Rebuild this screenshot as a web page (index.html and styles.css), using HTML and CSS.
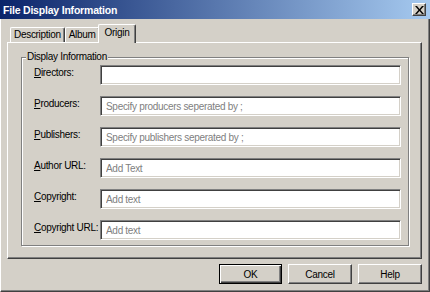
FILE: index.html
```html
<!DOCTYPE html>
<html>

<head>
    <title>File Display Information</title>
    <link rel="stylesheet" href="styles.css">
</head>

<body>
    <div class="window">
        <div class="titlebar">
            <span class="title">File Display Information</span>
            <div class="close-btn">
                <svg width="9" height="8" viewBox="0 0 9 8">
                    <path d="M0 0h2l2.5 3 2.5-3h2l-3.5 4 3.5 4h-2l-2.5-3-2.5 3h-2l3.5-4z" fill="#000" />
                </svg>
            </div>
        </div>

        <div class="tabs">
            <div class="tab">Description</div>
            <div class="tab">Album</div>
            <div class="tab active">Origin</div>
        </div>

        <div class="tab-panel">
            <fieldset class="group">
                <legend>Display Information</legend>
                <div class="form-row">
                    <label><u>D</u>irectors:</label>
                    <input type="text">
                </div>
                <div class="form-row">
                    <label><u>P</u>roducers:</label>
                    <input type="text" placeholder="Specify producers seperated by ;">
                </div>
                <div class="form-row">
                    <label><u>P</u>ublishers:</label>
                    <input type="text" placeholder="Specify publishers seperated by ;">
                </div>
                <div class="form-row">
                    <label><u>A</u>uthor URL:</label>
                    <input type="text" placeholder="Add Text">
                </div>
                <div class="form-row">
                    <label><u>C</u>opyright:</label>
                    <input type="text" placeholder="Add text">
                </div>
                <div class="form-row">
                    <label><u>C</u>opyright URL:</label>
                    <input type="text" placeholder="Add text">
                </div>
            </fieldset>
        </div>

        <div class="buttons">
            <button class="default">OK</button>
            <button>Cancel</button>
            <button>Help</button>
        </div>
    </div>
</body>

</html>
```

FILE: styles.css
```css
body {
    margin: 0;
    font-family: "Liberation Sans", Arial, sans-serif;
    font-size: 10px;
    letter-spacing: -0.3px;
    color: #000;
}

.window {
    width: 430px;
    height: 292px;
    box-sizing: border-box;
    background: #d4d0c8;
    border-left: 1px solid #fff;
    border-right: 1px solid #404040;
    border-bottom: 1px solid #404040;
    box-shadow: inset -1px -1px 0 #808080;
    display: flex;
    flex-direction: column;
}

.titlebar {
    height: 19px;
    margin-left: -1px;
    margin-right: -1px;
    display: flex;
    align-items: center;
    justify-content: space-between;
    padding: 0 4px 0 3px;
    background: linear-gradient(to right, #0a246a, #a6caf0);
}

.title {
    color: #fff;
    font-weight: bold;
    font-size: 10.5px;
    letter-spacing: -0.2px;
}

.close-btn {
    width: 14px;
    height: 13px;
    box-sizing: border-box;
    background: #d4d0c8;
    border-top: 1px solid #fff;
    border-left: 1px solid #fff;
    border-right: 1px solid #404040;
    border-bottom: 1px solid #404040;
    box-shadow: inset -1px -1px 0 #808080;
    display: flex;
    align-items: center;
    justify-content: center;
}

.tabs {
    display: flex;
    align-items: flex-end;
    height: 19px;
    margin-top: 4px;
    padding-left: 9px;
}

.tab {
    height: 15px;
    padding: 0 3px;
    box-sizing: border-box;
    line-height: 14px;
    border-top: 1px solid #fff;
    border-left: 1px solid #fff;
    border-right: 1px solid #404040;
    border-top-left-radius: 2px;
    border-top-right-radius: 2px;
    box-shadow: inset -1px 0 0 #808080;
}

.tab.active {
    height: 19px;
    margin: 0 -2px -1px;
    padding: 0 6px;
    line-height: 16px;
    background: #d4d0c8;
    position: relative;
    z-index: 1;
}

.tab-panel {
    height: 217px;
    margin: 0 7px 0 6px;
    box-sizing: border-box;
    border-top: 1px solid #fff;
    border-left: 1px solid #fff;
    border-right: 1px solid #404040;
    border-bottom: 1px solid #404040;
    box-shadow: inset -1px -1px 0 #808080;
    padding: 8px 12px 0 13px;
}

.group {
    margin: 0;
    padding: 2px 7px 3px 12px;
    height: 195px;
    box-sizing: border-box;
    border: 1px solid #808080;
    box-shadow: inset 1px 1px 0 #fff, 1px 1px 0 #fff;
}

.group legend {
    padding: 0 1px;
    margin-left: -8px;
    background: #d4d0c8;
    line-height: 12px;
}

.form-row {
    display: flex;
    align-items: flex-start;
    margin-bottom: 11px;
}

.form-row:last-child {
    margin-bottom: 0;
}

.form-row label {
    width: 66px;
    padding-top: 2px;
    flex-shrink: 0;
    white-space: nowrap;
}

.form-row input {
    flex: 1;
    min-width: 0;
    height: 20px;
    box-sizing: border-box;
    margin: 0;
    padding: 0 0 0 5px;
    font-family: inherit;
    font-size: 10px;
    letter-spacing: -0.3px;
    background: #fff;
    border-top: 1px solid #808080;
    border-left: 1px solid #808080;
    border-right: 1px solid #fff;
    border-bottom: 1px solid #fff;
    box-shadow: inset 1px 1px 0 #404040, inset -1px -1px 0 #d4d0c8;
    outline: none;
}

.form-row input::placeholder {
    color: #808080;
}

.buttons {
    display: flex;
    justify-content: flex-end;
    gap: 6px;
    margin-top: 5px;
    padding-right: 7px;
}

button {
    width: 64px;
    height: 20px;
    box-sizing: border-box;
    padding: 0;
    font-family: inherit;
    font-size: 10px;
    letter-spacing: -0.3px;
    color: #000;
    background: #d4d0c8;
    border-top: 1px solid #fff;
    border-left: 1px solid #fff;
    border-right: 1px solid #404040;
    border-bottom: 1px solid #404040;
    box-shadow: inset -1px -1px 0 #808080;
}

button.default {
    width: 63px;
    border: 1px solid #000;
    box-shadow: inset 1px 1px 0 #fff, inset -1px -1px 0 #404040, inset -2px -2px 0 #808080;
}
```
